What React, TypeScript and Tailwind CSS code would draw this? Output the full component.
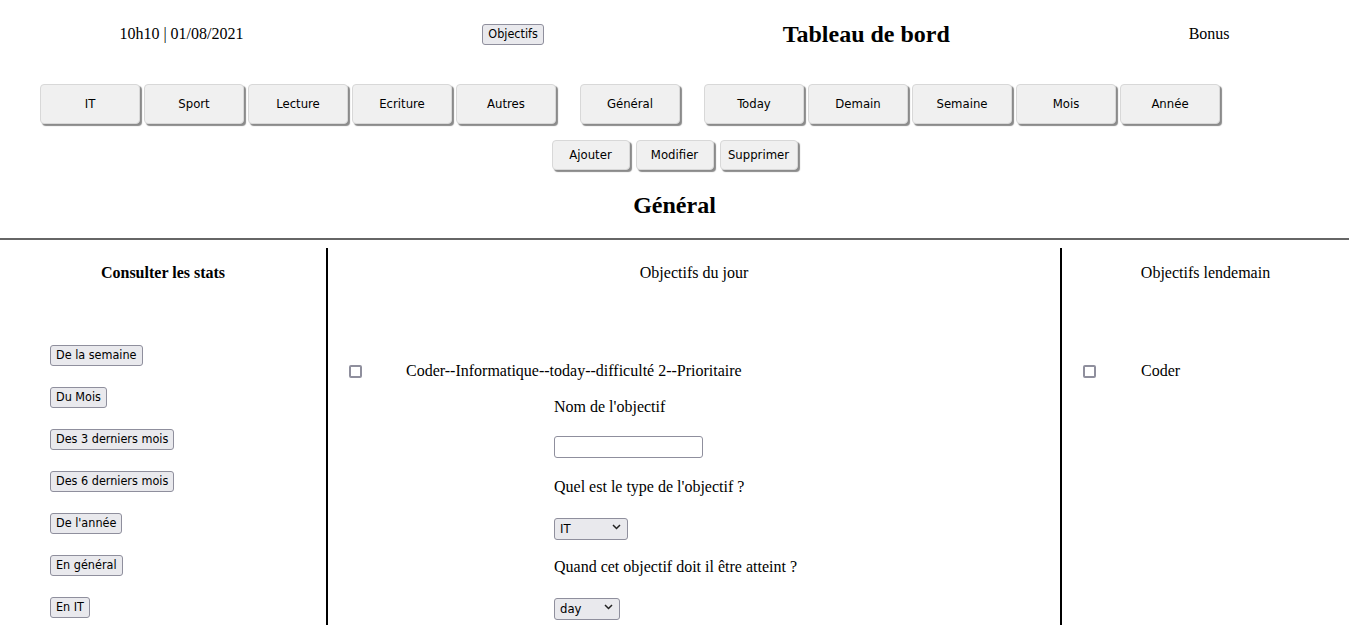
const bigBtn =
    'w-[100px] h-[40px] rounded-[4px] bg-[#f0f0f0] border border-[#d8d8d8] shadow-[2px_2px_1px_#8a8a8a] text-[13px] text-black font-["DejaVu_Sans_Condensed","DejaVu_Sans",sans-serif]';
const midBtn =
    'w-[78px] h-[30px] rounded-[4px] bg-[#f0f0f0] border border-[#d8d8d8] shadow-[2px_2px_1px_#8a8a8a] text-[13px] text-black font-["DejaVu_Sans_Condensed","DejaVu_Sans",sans-serif]';
const smallBtn =
    'h-[21px] px-[5px] rounded-[3px] bg-[#e9e9ed] border border-[#8f8f9d] text-[12.5px] leading-none text-black font-["DejaVu_Sans_Condensed","DejaVu_Sans",sans-serif]';

const categories = ['IT', 'Sport', 'Lecture', 'Ecriture', 'Autres'];
const periods = ['Today', 'Demain', 'Semaine', 'Mois', 'Année'];
const stats = ['De la semaine', 'Du Mois', 'Des 3 derniers mois', 'Des 6 derniers mois', "De l'année", 'En général', 'En IT'];

function Checkbox() {
    return <input type="checkbox" className="appearance-none w-[13px] h-[13px] border-2 border-[#8f8f9d] rounded-[2px] bg-white shrink-0" />;
}

function Select({ value, width }: { value: string; width: string }) {
    return (
        <div className={`relative h-[22px] ${width}`}>
            <select className='appearance-none w-full h-full rounded-[3px] bg-[#e9e9ed] border border-[#8f8f9d] pl-[5px] text-[13px] text-black font-["DejaVu_Sans_Condensed","DejaVu_Sans",sans-serif]'>
                <option>{value}</option>
            </select>
            <svg className="absolute right-[7px] top-[8px] pointer-events-none" width="9" height="6" viewBox="0 0 9 6">
                <path d="M1 1l3.5 3.5L8 1" fill="none" stroke="#222" strokeWidth="1.5" />
            </svg>
        </div>
    );
}

export default function App() {
    return (
        <div className="min-h-screen bg-white text-black font-['Liberation_Serif',serif] text-[16px]">
            <div className="h-[68px] flex items-center justify-around">
                <span>10h10 | 01/08/2021</span>
                <button className={smallBtn}>Objectifs</button>
                <h1 className="text-[24px] font-bold">Tableau de bord</h1>
                <span>Bonus</span>
            </div>

            <div className="mt-[16px] ml-[40px] flex">
                <div className="flex gap-[4px]">
                    {categories.map((c) => (
                        <button key={c} className={bigBtn}>
                            {c}
                        </button>
                    ))}
                </div>
                <button className={`${bigBtn} ml-[24px]`}>Général</button>
                <div className="flex gap-[4px] ml-[24px]">
                    {periods.map((p) => (
                        <button key={p} className={bigBtn}>
                            {p}
                        </button>
                    ))}
                </div>
            </div>

            <div className="mt-[16px] flex justify-center gap-[6px]">
                <button className={midBtn}>Ajouter</button>
                <button className={midBtn}>Modifier</button>
                <button className={midBtn}>Supprimer</button>
            </div>

            <h2 className="mt-[20px] h-[30px] leading-[30px] text-center text-[24px] font-bold">Général</h2>

            <hr className="mt-[18px] border-t-2 border-[#666]" />

            <div className="mt-[8px] flex">
                <div className="w-[326px] shrink-0">
                    <div className="h-[50px] flex items-center justify-center font-bold">Consulter les stats</div>
                    <div className="mt-[47px] pl-[50px] flex flex-col gap-[21px] items-start">
                        {stats.map((s) => (
                            <button key={s} className={smallBtn}>
                                {s}
                            </button>
                        ))}
                    </div>
                </div>

                <div className="w-[736px] shrink-0 border-x-2 border-black min-h-[377px]">
                    <div className="h-[50px] flex items-center justify-center">Objectifs du jour</div>
                    <div className="mt-[64px] h-[18px] flex items-center pl-[21px]">
                        <Checkbox />
                        <span className="ml-[44px]">Coder--Informatique--today--difficulté 2--Prioritaire</span>
                    </div>
                    <div className="pl-[226px]">
                        <div className="h-[40px] flex items-center mt-[7px]">Nom de l'objectif</div>
                        <div className="h-[40px] flex items-center">
                            <input type="text" className="w-[149px] h-[22px] rounded-[3px] border border-[#8f8f9d] bg-white" />
                        </div>
                        <div className="h-[40px] flex items-center">Quel est le type de l'objectif ?</div>
                        <div className="h-[40px] flex items-center">
                            <Select value="IT" width="w-[74px]" />
                        </div>
                        <div className="h-[40px] flex items-center">Quand cet objectif doit il être atteint ?</div>
                        <div className="h-[40px] flex items-center">
                            <Select value="day" width="w-[66px]" />
                        </div>
                    </div>
                </div>

                <div className="flex-1">
                    <div className="h-[50px] flex items-center justify-center">Objectifs lendemain</div>
                    <div className="mt-[64px] h-[18px] flex items-center pl-[21px]">
                        <Checkbox />
                        <span className="ml-[45px]">Coder</span>
                    </div>
                </div>
            </div>
        </div>
    );
}
